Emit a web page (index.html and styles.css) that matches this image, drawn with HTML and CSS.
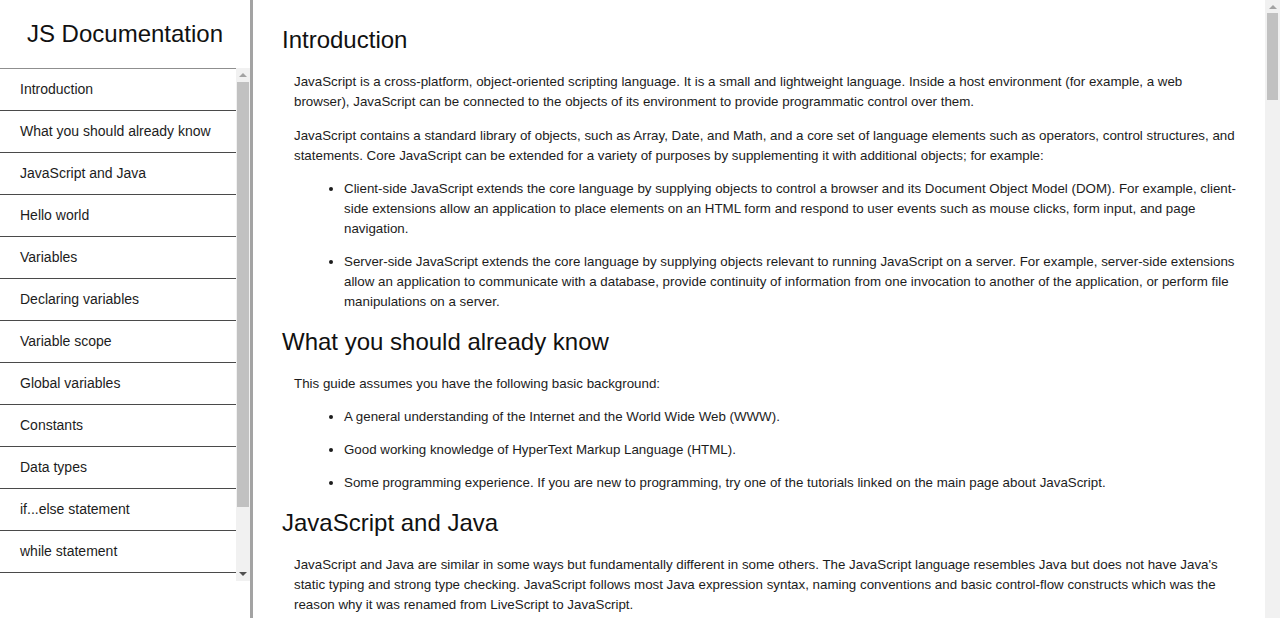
FILE: index.html
```html
<!DOCTYPE html>
<html lang="en">
<head>
<meta charset="utf-8">
<title>JS Documentation</title>
<link rel="stylesheet" href="styles.css">
</head>
<body>
<div class="page">
  <nav id="navbar" class="sidebar">
    <header class="sidebar-title">JS Documentation</header>
    <div class="nav-scroll">
      <ul class="nav-list">
        <li><a class="nav-link" href="#Introduction">Introduction</a></li>
        <li><a class="nav-link" href="#What_you_should_already_know">What you should already know</a></li>
        <li><a class="nav-link" href="#JavaScript_and_Java">JavaScript and Java</a></li>
        <li><a class="nav-link" href="#Hello_world">Hello world</a></li>
        <li><a class="nav-link" href="#Variables">Variables</a></li>
        <li><a class="nav-link" href="#Declaring_variables">Declaring variables</a></li>
        <li><a class="nav-link" href="#Variable_scope">Variable scope</a></li>
        <li><a class="nav-link" href="#Global_variables">Global variables</a></li>
        <li><a class="nav-link" href="#Constants">Constants</a></li>
        <li><a class="nav-link" href="#Data_types">Data types</a></li>
        <li><a class="nav-link" href="#if...else_statement">if...else statement</a></li>
        <li><a class="nav-link" href="#while_statement">while statement</a></li>
        <li><a class="nav-link" href="#Function_declarations">Function declarations</a></li>
        <li><a class="nav-link" href="#Reference">Reference</a></li>
      </ul>
      <div class="scrollbar scrollbar-nav" aria-hidden="true">
        <div class="sb-button"><span class="sb-arrow sb-up"></span></div>
        <div class="sb-track"><div class="sb-thumb sb-thumb-nav"></div></div>
        <div class="sb-button"><span class="sb-arrow sb-down"></span></div>
      </div>
    </div>
  </nav>

  <main id="main-doc" class="content">
    <section class="main-section" id="Introduction">
      <header class="section-title">Introduction</header>
      <article>
        <p>JavaScript is a cross-platform, object-oriented scripting language. It is a small and lightweight language. Inside a host environment (for example, a web browser), JavaScript can be connected to the objects of its environment to provide programmatic control over them.</p>
        <p>JavaScript contains a standard library of objects, such as Array, Date, and Math, and a core set of language elements such as operators, control structures, and statements. Core JavaScript can be extended for a variety of purposes by supplementing it with additional objects; for example:</p>
        <ul>
          <li>Client-side JavaScript extends the core language by supplying objects to control a browser and its Document Object Model (DOM). For example, client-side extensions allow an application to place elements on an HTML form and respond to user events such as mouse clicks, form input, and page navigation.</li>
          <li>Server-side JavaScript extends the core language by supplying objects relevant to running JavaScript on a server. For example, server-side extensions allow an application to communicate with a database, provide continuity of information from one invocation to another of the application, or perform file manipulations on a server.</li>
        </ul>
      </article>
    </section>

    <section class="main-section" id="What_you_should_already_know">
      <header class="section-title">What you should already know</header>
      <article>
        <p>This guide assumes you have the following basic background:</p>
        <ul>
          <li>A general understanding of the Internet and the World Wide Web (WWW).</li>
          <li>Good working knowledge of HyperText Markup Language (HTML).</li>
          <li>Some programming experience. If you are new to programming, try one of the tutorials linked on the main page about JavaScript.</li>
        </ul>
      </article>
    </section>

    <section class="main-section" id="JavaScript_and_Java">
      <header class="section-title">JavaScript and Java</header>
      <article>
        <p>JavaScript and Java are similar in some ways but fundamentally different in some others. The JavaScript language resembles Java but does not have Java's static typing and strong type checking. JavaScript follows most Java expression syntax, naming conventions and basic control-flow constructs which was the reason why it was renamed from LiveScript to JavaScript.</p>
        <p>In contrast to Java's compile-time system of classes built by declarations, JavaScript supports a runtime system based on a small number of data types representing numeric, Boolean, and string values. JavaScript has a prototype-based object model instead of the more common class-based object model. The prototype-based model provides dynamic inheritance; that is, what is inherited can vary for individual objects. JavaScript also supports functions without any special declarative requirements. Functions can be properties of objects, executing as loosely typed methods.</p>
        <p>JavaScript is a very free-form language compared to Java. You do not have to declare all variables, classes, and methods. You do not have to be concerned with whether methods are public, private, or protected, and you do not have to implement interfaces. Variables, parameters, and function return types are not explicitly typed.</p>
      </article>
    </section>

    <section class="main-section" id="Hello_world">
      <header class="section-title">Hello world</header>
      <article>
        <p>To get started with writing JavaScript, open the Scratchpad and write your first "Hello world" JavaScript code:</p>
        <pre><code>function greetMe(yourName) { alert("Hello " + yourName); }
greetMe("World");</code></pre>
        <p>Select the code in the pad and hit Ctrl+R to watch it unfold in your browser!</p>
      </article>
    </section>

    <section class="main-section" id="Variables">
      <header class="section-title">Variables</header>
      <article>
        <p>You use variables as symbolic names for values in your application. The names of variables, called identifiers, conform to certain rules.</p>
        <p>A JavaScript identifier must start with a letter, underscore (_), or dollar sign ($); subsequent characters can also be digits (0-9). Because JavaScript is case sensitive, letters include the characters "A" through "Z" (uppercase) and the characters "a" through "z" (lowercase).</p>
        <p>You can use ISO 8859-1 or Unicode letters such as å and ü in identifiers. You can also use the Unicode escape sequences as characters in identifiers. Some examples of legal names are Number_hits, temp99, and _name.</p>
      </article>
    </section>

    <section class="main-section" id="Declaring_variables">
      <header class="section-title">Declaring variables</header>
      <article>
        <p>You can declare a variable in three ways:</p>
        <p>With the keyword var. For example,</p>
        <pre><code>var x = 42.</code></pre>
        <p>This syntax can be used to declare both local and global variables.</p>
        <p>By simply assigning it a value. For example,</p>
        <pre><code>x = 42.</code></pre>
        <p>This always declares a global variable. It generates a strict JavaScript warning. You shouldn't use this variant.</p>
        <p>With the keyword let. For example,</p>
        <pre><code>let y = 13.</code></pre>
        <p>This syntax can be used to declare a block scope local variable. See Variable scope below.</p>
      </article>
    </section>

    <section class="main-section" id="Variable_scope">
      <header class="section-title">Variable scope</header>
      <article>
        <p>When you declare a variable outside of any function, it is called a global variable, because it is available to any other code in the current document. When you declare a variable within a function, it is called a local variable, because it is available only within that function.</p>
        <p>JavaScript before ECMAScript 2015 does not have block statement scope; rather, a variable declared within a block is local to the function (or global scope) that the block resides within. For example the following code will log 5, because the scope of x is the function (or global context) within which x is declared, not the block, which in this case is an if statement.</p>
        <pre><code>if (true) {
  var x = 5;
}
console.log(x); // 5</code></pre>
        <p>This behavior changes, when using the let declaration introduced in ECMAScript 2015.</p>
        <pre><code>if (true) {
  let y = 5;
}
console.log(y); // ReferenceError: y is not defined</code></pre>
      </article>
    </section>

    <section class="main-section" id="Global_variables">
      <header class="section-title">Global variables</header>
      <article>
        <p>Global variables are in fact properties of the global object. In web pages the global object is window, so you can set and access global variables using the window.variable syntax.</p>
        <p>Consequently, you can access global variables declared in one window or frame from another window or frame by specifying the window or frame name. For example, if a variable called phoneNumber is declared in a document, you can refer to this variable from an iframe as parent.phoneNumber.</p>
      </article>
    </section>

    <section class="main-section" id="Constants">
      <header class="section-title">Constants</header>
      <article>
        <p>You can create a read-only, named constant with the const keyword. The syntax of a constant identifier is the same as for a variable identifier: it must start with a letter, underscore or dollar sign and can contain alphabetic, numeric, or underscore characters.</p>
        <pre><code>const PI = 3.14;</code></pre>
        <p>A constant cannot change value through assignment or be re-declared while the script is running. It has to be initialized to a value.</p>
        <p>The scope rules for constants are the same as those for let block scope variables. If the const keyword is omitted, the identifier is assumed to represent a variable.</p>
        <p>You cannot declare a constant with the same name as a function or variable in the same scope. For example:</p>
        <pre><code>// THIS WILL CAUSE AN ERROR
function f() {};
const f = 5;

// THIS WILL CAUSE AN ERROR ALSO
function f() {
  const g = 5;
  var g;

  //statements
}</code></pre>
        <p>However, object attributes are not protected, so the following statement is executed without problems.</p>
        <pre><code>const MY_OBJECT = {"key": "value"};
MY_OBJECT.key = "otherValue";</code></pre>
      </article>
    </section>

    <section class="main-section" id="Data_types">
      <header class="section-title">Data types</header>
      <article>
        <p>The latest ECMAScript standard defines seven data types:</p>
        <ul>
          <li>Six data types that are primitives:
            <ul>
              <li>Boolean. true and false.</li>
              <li>null. A special keyword denoting a null value. Because JavaScript is case-sensitive, null is not the same as Null, NULL, or any other variant.</li>
              <li>undefined. A top-level property whose value is undefined.</li>
              <li>Number. 42 or 3.14159.</li>
              <li>String. "Howdy"</li>
              <li>Symbol (new in ECMAScript 2015). A data type whose instances are unique and immutable.</li>
            </ul>
          </li>
          <li>and Object</li>
        </ul>
        <p>Although these data types are a relatively small amount, they enable you to perform useful functions with your applications. Objects and functions are the other fundamental elements in the language. You can think of objects as named containers for values, and functions as procedures that your application can perform.</p>
      </article>
    </section>

    <section class="main-section" id="if...else_statement">
      <header class="section-title">if...else statement</header>
      <article>
        <p>Use the if statement to execute a statement if a logical condition is true. Use the optional else clause to execute a statement if the condition is false. An if statement looks as follows:</p>
        <pre><code>if (condition) {
  statement_1;
} else {
  statement_2;
}</code></pre>
        <p>condition can be any expression that evaluates to true or false. See Boolean for an explanation of what evaluates to true and false. If condition evaluates to true, statement_1 is executed; otherwise, statement_2 is executed. statement_1 and statement_2 can be any statement, including further nested if statements.</p>
        <p>You may also compound the statements using else if to have multiple conditions tested in sequence, as follows:</p>
        <pre><code>if (condition_1) {
  statement_1;
} else if (condition_2) {
  statement_2;
} else if (condition_n) {
  statement_n;
} else {
  statement_last;
}</code></pre>
        <p>In the case of multiple conditions only the first logical condition which evaluates to true will be executed. To execute multiple statements, group them within a block statement ({ ... }) . In general, it's good practice to always use block statements, especially when nesting if statements:</p>
        <pre><code>if (condition) {
  statement_1_runs_if_condition_is_true;
  statement_2_runs_if_condition_is_true;
} else {
  statement_3_runs_if_condition_is_false;
  statement_4_runs_if_condition_is_false;
}</code></pre>
        <p>It is advisable to not use simple assignments in a conditional expression, because the assignment can be confused with equality when glancing over the code. For example, do not use the following code:</p>
        <pre><code>if (x = y) {
  /* statements here */
}</code></pre>
        <p>If you need to use an assignment in a conditional expression, a common practice is to put additional parentheses around the assignment. For example:</p>
        <pre><code>if ((x = y)) {
  /* statements here */
}</code></pre>
      </article>
    </section>

    <section class="main-section" id="while_statement">
      <header class="section-title">while statement</header>
      <article>
        <p>A while statement executes its statements as long as a specified condition evaluates to true. A while statement looks as follows:</p>
        <pre><code>while (condition)
  statement</code></pre>
        <p>If the condition becomes false, statement within the loop stops executing and control passes to the statement following the loop.</p>
        <p>The condition test occurs before statement in the loop is executed. If the condition returns true, statement is executed and the condition is tested again. If the condition returns false, execution stops and control is passed to the statement following while.</p>
        <p>To execute multiple statements, use a block statement ({ ... }) to group those statements.</p>
        <p>Example:</p>
        <p>The following while loop iterates as long as n is less than three:</p>
        <pre><code>var n = 0;
var x = 0;
while (n &lt; 3) {
  n++;
  x += n;
}</code></pre>
        <p>With each iteration, the loop increments n and adds that value to x. Therefore, x and n take on the following values:</p>
        <ul>
          <li>After the first pass: n = 1 and x = 1</li>
          <li>After the second pass: n = 2 and x = 3</li>
          <li>After the third pass: n = 3 and x = 6</li>
        </ul>
        <p>After completing the third pass, the condition n &lt; 3 is no longer true, so the loop terminates.</p>
      </article>
    </section>

    <section class="main-section" id="Function_declarations">
      <header class="section-title">Function declarations</header>
      <article>
        <p>A function definition (also called a function declaration, or function statement) consists of the function keyword, followed by:</p>
        <ul>
          <li>The name of the function.</li>
          <li>A list of arguments to the function, enclosed in parentheses and separated by commas.</li>
          <li>The JavaScript statements that define the function, enclosed in curly brackets, { }.</li>
        </ul>
        <p>For example, the following code defines a simple function named square:</p>
        <pre><code>function square(number) {
  return number * number;
}</code></pre>
        <p>The function square takes one argument, called number. The function consists of one statement that says to return the argument of the function (that is, number) multiplied by itself. The return statement specifies the value returned by the function.</p>
        <pre><code>return number * number;</code></pre>
        <p>Primitive parameters (such as a number) are passed to functions by value; the value is passed to the function, but if the function changes the value of the parameter, this change is not reflected globally or in the calling function.</p>
      </article>
    </section>

    <section class="main-section" id="Reference">
      <header class="section-title">Reference</header>
      <article>
        <ul>
          <li>All the documentation in this page is taken from MDN</li>
        </ul>
      </article>
    </section>
  </main>

  <div class="scrollbar scrollbar-main" aria-hidden="true">
    <div class="sb-button sb-button-main"><span class="sb-arrow sb-up"></span></div>
    <div class="sb-track"><div class="sb-thumb sb-thumb-main"></div></div>
  </div>
</div>
</body>
</html>
```

FILE: styles.css
```css
html, body {
  margin: 0;
  padding: 0;
  height: 100%;
}

body {
  font-family: "Liberation Sans", Arial, sans-serif;
  color: #1c1c1c;
  background: #fff;
  overflow: hidden;
}

.page {
  display: flex;
  height: 100vh;
}

/* ---------- drawn scrollbars ---------- */
.scrollbar {
  display: flex;
  flex-direction: column;
  background: #f1f1f1;
  flex: 0 0 auto;
}

.scrollbar-nav {
  width: 14px;
}

.scrollbar-main {
  width: 15px;
  height: 100vh;
}

.sb-button {
  height: 14px;
  flex: 0 0 14px;
  display: flex;
  align-items: center;
  justify-content: center;
}

.sb-button-main {
  height: 13px;
  flex-basis: 13px;
}

.sb-arrow {
  width: 0;
  height: 0;
  border-left: 4px solid transparent;
  border-right: 4px solid transparent;
}

.sb-up {
  border-bottom: 4px solid #a3a3a3;
}

.sb-down {
  border-top: 4px solid #505050;
}

.sb-track {
  flex: 1;
  display: flex;
  flex-direction: column;
  padding: 0 1px;
}

.scrollbar-main .sb-track {
  padding: 0 2px;
}

.sb-thumb {
  background: #c1c1c1;
}

.sb-thumb-nav {
  height: 425px;
}

.sb-thumb-main {
  height: 87px;
}

/* ---------- sidebar ---------- */
.sidebar {
  flex: 0 0 250px;
  width: 250px;
  border-right: 3px solid #a3a3a3;
  display: flex;
  flex-direction: column;
}

.sidebar-title {
  box-sizing: border-box;
  height: 68px;
  padding-top: 20px;
  font-size: 24px;
  line-height: 28px;
  text-align: center;
  color: #111;
}

.nav-scroll {
  display: flex;
  height: 513px;
}

.nav-list {
  flex: 1;
  list-style: none;
  margin: 0;
  padding: 0;
  overflow: hidden;
  border-top: 1px solid #8f8f8f;
}

.nav-link {
  display: block;
  height: 41px;
  line-height: 41px;
  padding: 0 20px;
  border-bottom: 1px solid #4a4a4a;
  font-size: 14px;
  color: #1c1c1c;
  text-decoration: none;
  white-space: nowrap;
}

/* ---------- main ---------- */
.content {
  flex: 1;
  height: 100vh;
  overflow: hidden;
  box-sizing: border-box;
  padding: 10px 25px 40px 29px;
  font-size: 13.33px;
  line-height: 20px;
}

.main-section {
  display: block;
}

.section-title {
  font-size: 24px;
  line-height: 28px;
  margin: 16px 0 18px;
  color: #111;
}

.main-section article {
  margin-left: 12px;
}

.main-section p {
  margin: 14px 0 13px;
}

.main-section ul {
  margin: 0;
  padding-left: 50px;
}

.main-section li {
  margin-bottom: 13px;
}

.main-section li ul {
  margin-top: 13px;
  padding-left: 30px;
}

.main-section pre {
  margin: 14px 0;
  padding: 12px 16px;
  background: #f2f2f2;
  border-radius: 4px;
  font-family: "Liberation Mono", "Courier New", monospace;
  font-size: 13px;
  line-height: 18px;
}
```
